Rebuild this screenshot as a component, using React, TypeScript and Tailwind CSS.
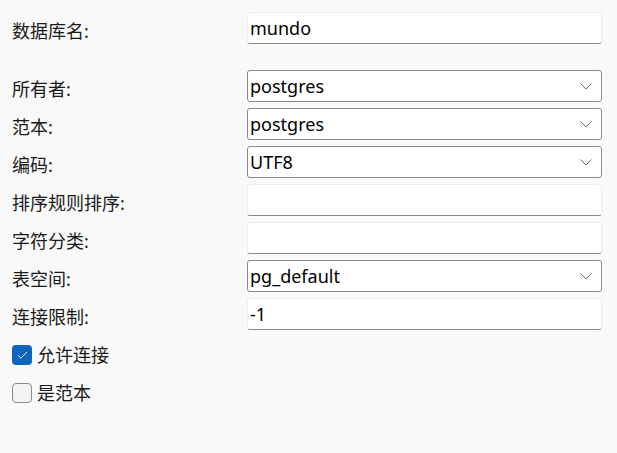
import { Check } from 'lucide-react';

const font = "font-['Segoe_UI','Noto_Sans','Noto_Sans_CJK_SC',sans-serif]";

function Chevron() {
  return (
    <svg width="12" height="7" viewBox="0 0 12 7" className="shrink-0">
      <polyline points="0.5,0.5 6,6 11.5,0.5" fill="none" stroke="#6b6b6b" strokeWidth="1" />
    </svg>
  );
}

function Field({ value = '', select = false }: { value?: string; select?: boolean }) {
  if (select) {
    return (
      <div className="flex h-[32px] w-[355px] items-center justify-between rounded-[3px] border border-[#8a8a8a] bg-white pl-[2px] pr-[9px] text-[18px] text-black">
        <span className="leading-none">{value}</span>
        <Chevron />
      </div>
    );
  }
  return (
    <div className="flex h-[32px] w-[355px] items-center rounded-[3px] border border-[#ececec] border-b-[#8a8a8a] bg-white pl-[2px] text-[18px] text-black">
      <span className="leading-none">{value}</span>
    </div>
  );
}

function Row({ label, children }: { label: string; children: React.ReactNode }) {
  return (
    <div className="flex items-center">
      <div className="w-[235px] pt-[6px] text-[18px] leading-none text-[#1b1b1b]">{label}</div>
      {children}
    </div>
  );
}

function Checkbox({ checked, label }: { checked: boolean; label: string }) {
  return (
    <div className="flex h-[20px] items-center gap-[5px]">
      {checked ? (
        <div className="flex h-[20px] w-[20px] items-center justify-center rounded-[4px] bg-[#0f64be]">
          <Check size={13} strokeWidth={1.6} color="white" />
        </div>
      ) : (
        <div className="h-[20px] w-[20px] rounded-[4px] border border-[#8a8a8a] bg-[#f3f3f3]" />
      )}
      <span className="text-[18px] leading-none text-[#1b1b1b]">{label}</span>
    </div>
  );
}

export default function App() {
  return (
    <div className={`${font} h-[453px] w-[617px] bg-[#f9f9f9] pl-[12px] pt-[12px]`}>
      <div className="flex flex-col gap-[6px]">
        <Row label="数据库名:">
          <Field value="mundo" />
        </Row>
        <div className="mt-[20px]">
          <Row label="所有者:">
            <Field select value="postgres" />
          </Row>
        </div>
        <Row label="范本:">
          <Field select value="postgres" />
        </Row>
        <Row label="编码:">
          <Field select value="UTF8" />
        </Row>
        <Row label="排序规则排序:">
          <Field />
        </Row>
        <Row label="字符分类:">
          <Field />
        </Row>
        <Row label="表空间:">
          <Field select value="pg_default" />
        </Row>
        <Row label="连接限制:">
          <Field value="-1" />
        </Row>
      </div>
      <div className="mt-[15px] flex flex-col gap-[18px]">
        <Checkbox checked label="允许连接" />
        <Checkbox checked={false} label="是范本" />
      </div>
    </div>
  );
}
